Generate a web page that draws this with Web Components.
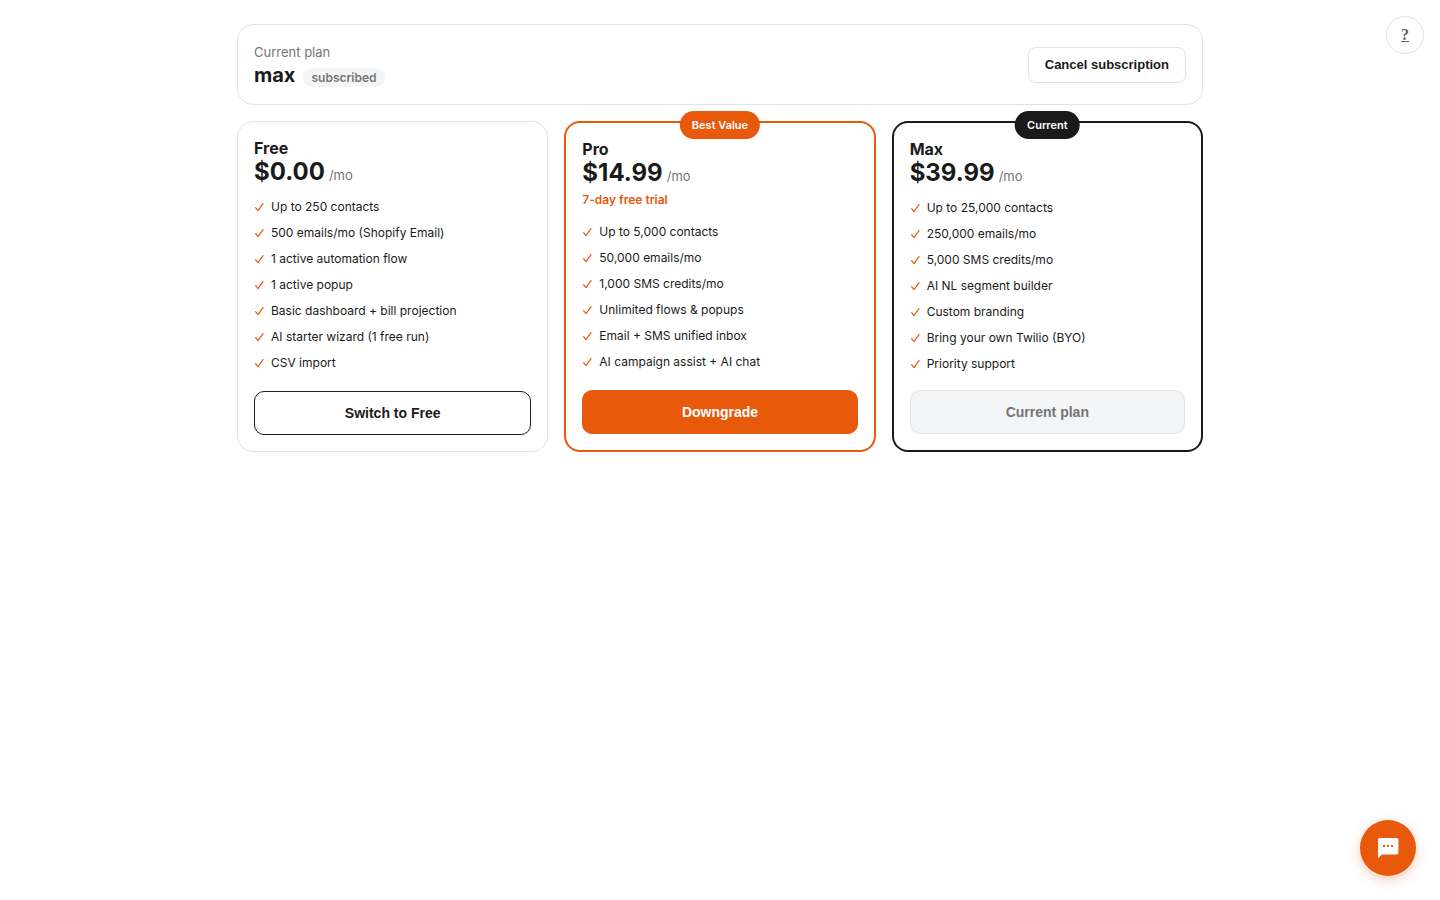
<!DOCTYPE html>
<html lang="en">
<head>
<meta charset="utf-8">
<meta name="viewport" content="width=device-width, initial-scale=1">
<title>Plans</title>
<style>
  body {
    margin: 0;
    background: #fff;
    color: #1a1a1a;
    font-family: Inter, sans-serif;
    --accent: #e8590c;
    --ink: #1a1a1a;
    --muted: #757575;
    --line: #e3e3e5;
    --soft: #f4f5f7;
  }
</style>
</head>
<body>
<billing-page>
  <current-plan plan="max" status="subscribed"></current-plan>
  <plan-grid>
    <plan-card name="Free" price="$0.00" action="Switch to Free">
      <plan-feature>Up to 250 contacts</plan-feature>
      <plan-feature>500 emails/mo (Shopify Email)</plan-feature>
      <plan-feature>1 active automation flow</plan-feature>
      <plan-feature>1 active popup</plan-feature>
      <plan-feature>Basic dashboard + bill projection</plan-feature>
      <plan-feature>AI starter wizard (1 free run)</plan-feature>
      <plan-feature>CSV import</plan-feature>
    </plan-card>
    <plan-card variant="best" name="Pro" price="$14.99" badge="Best Value" trial="7-day free trial" action="Downgrade">
      <plan-feature>Up to 5,000 contacts</plan-feature>
      <plan-feature>50,000 emails/mo</plan-feature>
      <plan-feature>1,000 SMS credits/mo</plan-feature>
      <plan-feature>Unlimited flows &amp; popups</plan-feature>
      <plan-feature>Email + SMS unified inbox</plan-feature>
      <plan-feature>AI campaign assist + AI chat</plan-feature>
    </plan-card>
    <plan-card variant="current" name="Max" price="$39.99" badge="Current" action="Current plan">
      <plan-feature>Up to 25,000 contacts</plan-feature>
      <plan-feature>250,000 emails/mo</plan-feature>
      <plan-feature>5,000 SMS credits/mo</plan-feature>
      <plan-feature>AI NL segment builder</plan-feature>
      <plan-feature>Custom branding</plan-feature>
      <plan-feature>Bring your own Twilio (BYO)</plan-feature>
      <plan-feature>Priority support</plan-feature>
    </plan-card>
  </plan-grid>
</billing-page>
<help-link></help-link>
<chat-launcher></chat-launcher>

<script>
const define = (name, render) => customElements.define(name, class extends HTMLElement {
  connectedCallback() {
    if (this.shadowRoot) return;
    this.attachShadow({ mode: 'open' }).innerHTML = render(this);
  }
});
const attr = (el, name) => el.getAttribute(name) || '';

define('billing-page', () => `
  <style>
    :host { display: block; }
    main { box-sizing: border-box; max-width: 966px; margin: 0 auto; padding: 24px 0; display: grid; gap: 16px; }
  </style>
  <main><slot></slot></main>`);

define('current-plan', el => `
  <style>
    :host { display: flex; align-items: center; justify-content: space-between; gap: 16px;
      padding: 16px; border: 1px solid var(--line); border-radius: 16px; background: #fff; }
    .label { font-size: 13px; line-height: 22px; color: var(--muted); }
    .row { display: flex; align-items: center; gap: 8px; }
    h1 { margin: 0; font-size: 20px; line-height: 25px; font-weight: 700; }
    .status { margin-top: 4px; padding: 0 8px; border-radius: 10px; background: var(--soft);
      color: var(--muted); font-size: 12px; line-height: 19px; font-weight: 600; }
    button { height: 36px; padding: 0 16px; border: 1px solid var(--line); border-radius: 8px; background: #fff;
      color: var(--ink); font: 700 13px "Liberation Sans", sans-serif; }
  </style>
  <div>
    <div class="label">Current plan</div>
    <div class="row"><h1>${attr(el, 'plan')}</h1><span class="status">${attr(el, 'status')}</span></div>
  </div>
  <button type="button">Cancel subscription</button>`);

define('plan-grid', () => `
  <style>
    :host { display: grid; grid-template-columns: repeat(auto-fit, minmax(260px, 1fr)); gap: 16px; }
  </style>
  <slot></slot>`);

define('plan-card', el => `
  <style>
    :host { position: relative; display: flex; flex-direction: column; box-sizing: border-box;
      padding: 16px; border: 1px solid var(--line); border-radius: 16px; background: #fff; }
    :host([variant="best"]) { border: 2px solid var(--accent); }
    :host([variant="current"]) { border: 2px solid var(--ink); }
    .badge { position: absolute; top: -12px; left: 50%; transform: translateX(-50%); padding: 0 12px;
      border-radius: 14px; background: var(--ink); color: #fff; font-size: 11px; line-height: 28px;
      font-weight: 600; white-space: nowrap; }
    :host([variant="best"]) .badge { background: var(--accent); }
    h2 { margin: 0; font-size: 16px; line-height: 20px; font-weight: 700; }
    .price { display: flex; align-items: baseline; gap: 4px; line-height: 28px; font-size: 13px; color: var(--muted); }
    .price strong { font-size: 24px; font-weight: 700; color: var(--ink); }
    .trial { font-size: 12px; line-height: 20px; font-weight: 600; color: var(--accent); }
    .list { flex: 1; display: grid; align-content: start; gap: 8px; margin: 9px 0 17px; }
    .trial + .list { margin-top: 13px; }
    button { height: 44px; padding: 0 16px; border: 1px solid var(--ink); border-radius: 10px; background: #fff;
      color: var(--ink); font: 700 14px "Liberation Sans", sans-serif; }
    :host([variant="best"]) button { border-color: var(--accent); background: var(--accent); color: #fff; }
    button:disabled { border-color: var(--line); background: var(--soft); color: var(--muted); }
  </style>
  ${attr(el, 'badge') && `<span class="badge">${attr(el, 'badge')}</span>`}
  <h2>${attr(el, 'name')}</h2>
  <div class="price"><strong>${attr(el, 'price')}</strong><span>/mo</span></div>
  ${attr(el, 'trial') && `<div class="trial">${attr(el, 'trial')}</div>`}
  <div class="list" role="list"><slot></slot></div>
  <button type="button" ${attr(el, 'variant') === 'current' ? 'disabled' : ''}>${attr(el, 'action')}</button>`);

define('plan-feature', () => `
  <style>
    :host { display: flex; align-items: center; gap: 6px; font-size: 12px; line-height: 18px; }
    svg { flex: none; width: 11px; height: 12px; }
  </style>
  <svg viewBox="0 0 11 12" fill="none" stroke="#e8590c" stroke-width="1.2" stroke-linecap="round" stroke-linejoin="round" aria-hidden="true"><path d="M1.6 6.6 4 9.6 9 2.6"/></svg>
  <span><slot></slot></span>`);

define('help-link', () => `
  <style>
    :host { position: fixed; top: 16px; right: 16px; }
    a { box-sizing: border-box; display: flex; align-items: center; justify-content: center; width: 38px; height: 38px;
      border: 1px solid var(--line); border-radius: 50%; background: #fff; color: #616161;
      font: 700 16px "Liberation Serif", serif; text-decoration: underline; }
  </style>
  <a href="#help" aria-label="Help">?</a>`);

define('chat-launcher', () => `
  <style>
    :host { position: fixed; right: 24px; bottom: 24px; }
    button { display: grid; place-items: center; width: 56px; height: 56px; padding: 0; border: 0; border-radius: 50%;
      background: var(--accent); box-shadow: 0 4px 12px rgba(232, 89, 12, .3); }
  </style>
  <button type="button" aria-label="Open chat">
    <svg width="24" height="24" viewBox="0 0 24 24" aria-hidden="true">
      <path fill="#fff" d="M3.6 2h17.2A1.6 1.6 0 0 1 22.4 3.6v13.2a1.6 1.6 0 0 1-1.6 1.6H6L2 22V3.6A1.6 1.6 0 0 1 3.6 2z"/>
      <path fill="#e8590c" d="M7 9h2v2H7zM11 9h2v2h-2zM15 9h2v2h-2z"/>
    </svg>
  </button>`);
</script>
</body>
</html>
